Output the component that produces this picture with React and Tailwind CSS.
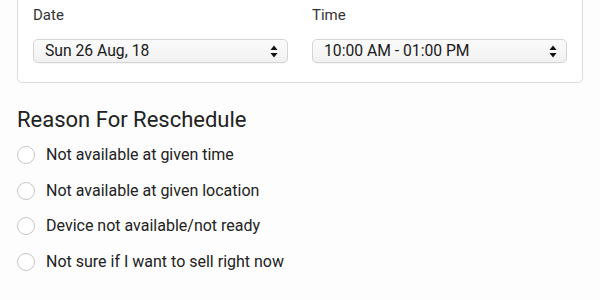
import React from 'react';

const font = { fontFamily: 'Roboto, "Liberation Sans", sans-serif' };

const Arrows = () => (
  <svg width="8" height="13" viewBox="0 0 8 13" className="shrink-0">
    <path d="M4 0.5 L7.5 5 L0.5 5 Z" fill="#111" />
    <path d="M4 12.5 L7.5 8 L0.5 8 Z" fill="#111" />
  </svg>
);

const FakeSelect = ({ value }) => (
  <div className="h-[24px] w-full rounded-[5px] border border-[#d4d4d4] bg-gradient-to-b from-[#fbfbfb] to-[#f1f1f1] flex items-center justify-between pl-[11px] pr-[9px] shadow-[0_1px_1px_rgba(0,0,0,0.04)]">
    <span className="text-[15.7px] text-[#1a1a1a] leading-none">{value}</span>
    <Arrows />
  </div>
);

const reasons = [
  'Not available at given time',
  'Not available at given location',
  'Device not available/not ready',
  'Not sure if I want to sell right now',
];

export default function App() {
  return (
    <div className="w-[600px] h-[300px] overflow-hidden bg-[#fdfdfd]" style={font}>
      <div className="px-[17px]">
        <div className="-mt-[21px] rounded-[5px] border border-[#dcdcdc] bg-white pt-[25px] pb-[19px] px-[15px]">
          <div className="grid grid-cols-2 gap-[24px]">
            <div>
              <div className="text-[15px] leading-[20px] text-[#333]">Date</div>
              <div className="mt-[14px]"><FakeSelect value="Sun 26 Aug, 18" /></div>
            </div>
            <div>
              <div className="text-[15px] leading-[20px] text-[#333]">Time</div>
              <div className="mt-[14px]"><FakeSelect value="10:00 AM - 01:00 PM" /></div>
            </div>
          </div>
        </div>

        <h2 className="mt-[23px] text-[22px] leading-[28px] text-[#222]">Reason For Reschedule</h2>
        <div className="mt-[3px] flex flex-col">
          {reasons.map((r) => (
            <label key={r} className="flex items-center h-[35.7px]">
              <span className="w-[18px] h-[18px] rounded-full border-[1.5px] border-[#c6c6c6] bg-white" />
              <span className="ml-[11px] text-[16px] text-[#222]">{r}</span>
            </label>
          ))}
        </div>
      </div>
    </div>
  );
}
